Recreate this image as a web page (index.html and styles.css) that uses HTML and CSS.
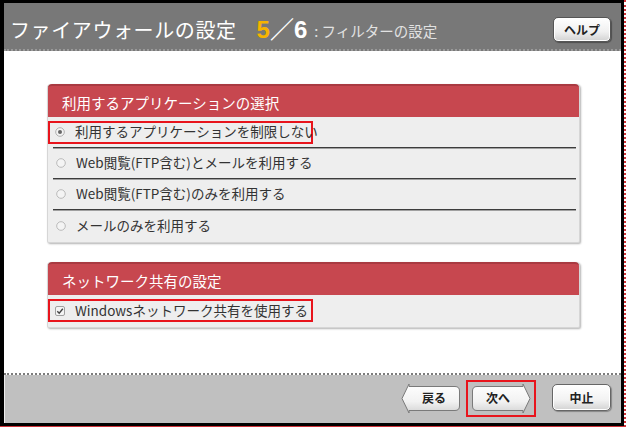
FILE: index.html
```html
<!DOCTYPE html>
<html lang="ja">
<head>
<meta charset="utf-8">
<link rel="stylesheet" href="styles.css">
</head>
<body>
<div class="page">
  <div class="frame">
    <header class="head">
      <h1 class="title">ファイアウォールの設定</h1>
      <span class="step"><span class="cur">5</span>／6</span>
      <span class="sub">: フィルターの設定</span>
      <button class="help">ヘルプ</button>
    </header>
    <main class="main">
      <section class="panel">
        <h2 class="panel-head">利用するアプリケーションの選択</h2>
        <div class="rows">
          <div class="row"><span class="hl"><svg class="radio" viewBox="0 0 10 10" width="10" height="10"><circle cx="5" cy="5" r="4.3" fill="#f4f4f4" stroke="#a8a8a8" stroke-width="0.9"/><circle cx="5" cy="5" r="2" fill="#666"/></svg><span class="lbl">利用するアプリケーションを制限しない</span></span></div>
          <div class="row"><svg class="radio" viewBox="0 0 10 10" width="10" height="10"><circle cx="5" cy="5" r="4.3" fill="#f4f4f4" stroke="#b4b4b4" stroke-width="0.9"/></svg><span class="lbl">Web閲覧(FTP含む)とメールを利用する</span></div>
          <div class="row"><svg class="radio" viewBox="0 0 10 10" width="10" height="10"><circle cx="5" cy="5" r="4.3" fill="#f4f4f4" stroke="#b4b4b4" stroke-width="0.9"/></svg><span class="lbl">Web閲覧(FTP含む)のみを利用する</span></div>
          <div class="row last"><svg class="radio" viewBox="0 0 10 10" width="10" height="10"><circle cx="5" cy="5" r="4.3" fill="#f4f4f4" stroke="#b4b4b4" stroke-width="0.9"/></svg><span class="lbl">メールのみを利用する</span></div>
        </div>
      </section>
      <section class="panel">
        <h2 class="panel-head">ネットワーク共有の設定</h2>
        <div class="rows">
          <div class="row last"><span class="hl"><svg class="radio" viewBox="0 0 10 10" width="10" height="10"><rect x="0.5" y="0.5" width="9" height="9" rx="1.5" fill="#f4f4f4" stroke="#a0a0a0"/><path d="M2.3 5.2 L4.2 7.2 L7.8 2.8" fill="none" stroke="#444" stroke-width="1.4"/></svg><span class="lbl">Windowsネットワーク共有を使用する</span></span></div>
        </div>
      </section>
    </main>
    <footer class="foot">
      <button class="arrow-btn">
        <svg viewBox="0 0 60 31" width="60" height="31"><defs><linearGradient id="g1" x1="0" y1="0" x2="0" y2="1"><stop offset="0" stop-color="#ffffff"/><stop offset="0.6" stop-color="#f2f2f2"/><stop offset="1" stop-color="#d4d4d4"/></linearGradient></defs><path d="M1 15.5 L8 1 L8 3.5 L54 3.5 Q58.5 3.5 58.5 8 L58.5 23 Q58.5 27.5 54 27.5 L8 27.5 L8 30 Z" fill="url(#g1)" stroke="#7a7a7a"/></svg>
        <span class="btxt back">戻る</span>
      </button>
      <span class="next-hl">
        <button class="arrow-btn">
          <svg viewBox="0 0 60 31" width="60" height="31"><defs><linearGradient id="g2" x1="0" y1="0" x2="0" y2="1"><stop offset="0" stop-color="#ffffff"/><stop offset="0.6" stop-color="#f2f2f2"/><stop offset="1" stop-color="#d4d4d4"/></linearGradient></defs><path d="M59 15.5 L52 1 L52 3.5 L6 3.5 Q1.5 3.5 1.5 8 L1.5 23 Q1.5 27.5 6 27.5 L52 27.5 L52 30 Z" fill="url(#g2)" stroke="#7a7a7a"/></svg>
          <span class="btxt next">次へ</span>
        </button>
      </span>
      <button class="plain-btn">中止</button>
    </footer>
  </div>
</div>
</body>
</html>
```
FILE: styles.css
```css
* { box-sizing: border-box; }
html, body { margin: 0; padding: 0; background: #fff; }
body { font-family: "Noto Sans CJK JP", "Noto Sans", sans-serif; }

.page {
  width: 626px;
  height: 427px;
  border-right: 2px dotted #d0343a;
  border-bottom: 1px solid #d0343a;
}
.frame {
  width: 624px;
  height: 426px;
  border-style: solid;
  border-color: #000;
  border-width: 3px 3px 3px 4px;
  display: flex;
  flex-direction: column;
  background: #fff;
}

.head {
  height: 48px;
  background: #787878;
  border-bottom: 2px dotted #9a9a9a;
  display: flex;
  align-items: center;
  padding: 7px 10px 0 6px;
  white-space: nowrap;
}
.title {
  margin: 0;
  font-size: 20px;
  font-weight: normal;
  color: #fff;
  letter-spacing: 0.6px;
  line-height: 1;
}
.step {
  margin-left: 20px;
  font-size: 24px;
  color: #fff;
  line-height: 1;
  font-family: "Liberation Sans", "Noto Sans CJK JP", sans-serif;
  font-weight: bold;
}
.step .cur { color: #f7b400; }
.sub {
  margin-left: 7px;
  margin-top: 3px;
  font-size: 14.5px;
  color: #e2e2e2;
  line-height: 1;
}
.help {
  margin-left: auto;
  width: 58px;
  height: 25px;
  border: 1px solid #555;
  border-radius: 5px;
  background: linear-gradient(#ffffff, #f0f0f0 60%, #d2d2d2);
  box-shadow: inset 0 0 0 1px #fff, 1px 1px 1px rgba(0,0,0,0.35);
  font-family: "Noto Sans CJK JP", sans-serif;
  font-size: 12px;
  font-weight: bold;
  color: #222;
  padding: 0;
}

.main {
  flex: 1;
  padding: 33px 41px 0 43px;
  display: flex;
  flex-direction: column;
  gap: 19px;
  border-bottom: 2px dotted #7c7c7c;
}
.panel {
  background: #eeeeee;
  border: 1px solid #d6d6d6;
  border-top: none;
  border-radius: 4px 4px 2px 2px;
  box-shadow: 1px 1px 2px rgba(0,0,0,0.3);
}
.panel-head {
  margin: 0;
  height: 33px;
  background: #c7474f;
  border-top: 2px solid #a93a41;
  border-radius: 4px 4px 0 0;
  color: #fff;
  font-size: 14.5px;
  font-weight: normal;
  display: flex;
  align-items: center;
  padding-left: 14px;
  padding-top: 1px;
}
.rows { display: flex; flex-direction: column; padding: 0 3px 1px 5px; }
.row {
  height: 31px;
  display: flex;
  align-items: center;
  padding-left: 3px;
  border-bottom: 1px solid #3c3c3c;
  box-shadow: 0 1px 0 #a0a0a0;
  font-size: 13.5px;
  color: #333;
  white-space: nowrap;
}
.row.last { border-bottom: none; box-shadow: none; }
.radio { flex: none; }
.lbl { margin-left: 10px; line-height: 1; }
.hl {
  display: flex;
  align-items: center;
  width: 265px;
  height: 23px;
  margin-left: -8px;
  padding-left: 5px;
  border: 2px solid #e8141c;
}

.foot {
  height: 48px;
  background: #c0c0c0;
  border-left: 1px solid #eee;
  display: flex;
  align-items: center;
  justify-content: flex-end;
  padding: 0 10px 1px 0;
}
.arrow-btn {
  display: grid;
  border: none;
  background: none;
  padding: 0;
  width: 60px;
  height: 31px;
}
.arrow-btn > * { grid-area: 1 / 1; }
.btxt {
  align-self: center;
  justify-self: center;
  font-size: 12px;
  font-weight: bold;
  color: #222;
  font-family: "Noto Sans CJK JP", sans-serif;
  margin-top: -3px;
}
.btxt.back { margin-left: 6px; }
.btxt.next { margin-right: 6px; }
.next-hl {
  margin-left: 5px;
  width: 70px;
  height: 37px;
  border: 2px solid #e8141c;
  display: flex;
  align-items: center;
  justify-content: center;
}
.plain-btn {
  margin-left: 16px;
  width: 59px;
  height: 27px;
  border: 1px solid #666;
  border-radius: 5px;
  background: linear-gradient(#ffffff, #f2f2f2 60%, #d2d2d2);
  box-shadow: inset 0 0 0 1px #fff, 1px 1px 1px rgba(0,0,0,0.3);
  font-family: "Noto Sans CJK JP", sans-serif;
  font-size: 12px;
  font-weight: bold;
  color: #222;
  padding: 0;
  margin-top: -2px;
}
```
